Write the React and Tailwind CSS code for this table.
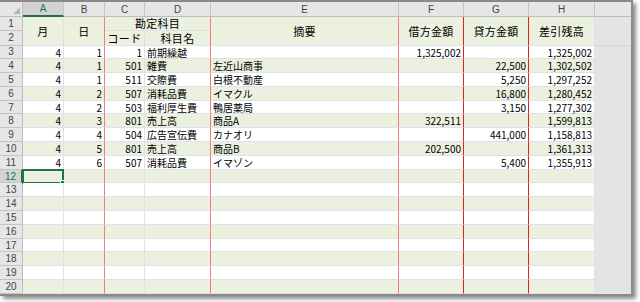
import React from 'react';

// column layout: width + right border colour
const COLS = [
    { key: 'a', w: 'w-[41px]', br: 'border-r-[#dde2e8]', align: 'text-right pr-[2px]' },
    { key: 'b', w: 'w-[41px]', br: 'border-r-[#f77a7a]', align: 'text-right pr-[2px]' },
    { key: 'c', w: 'w-[40px]', br: 'border-r-[#dde2e8]', align: 'text-right pr-[2px]' },
    { key: 'd', w: 'w-[66px]', br: 'border-r-[#f77a7a]', align: 'text-left pl-[2px]' },
    { key: 'e', w: 'w-[188px]', br: 'border-r-[#f77a7a]', align: 'text-left pl-[2px]' },
    { key: 'f', w: 'w-[65px]', br: 'border-r-[#f01c1c]', align: 'text-right pr-[2px]' },
    { key: 'g', w: 'w-[65px]', br: 'border-r-[#f01c1c]', align: 'text-right pr-[2px]' },
    { key: 'h', w: 'w-[66px]', br: 'border-r-[#dde2e8]', align: 'text-right pr-[2px]' },
];

const LETTERS = ['A', 'B', 'C', 'D', 'E', 'F', 'G', 'H'];

const DATA = [
    ['4', '1', '1', '前期繰越', '', '1,325,002', '', '1,325,002'],
    ['4', '1', '501', '雑費', '左近山商事', '', '22,500', '1,302,502'],
    ['4', '1', '511', '交際費', '白根不動産', '', '5,250', '1,297,252'],
    ['4', '2', '507', '消耗品費', 'イマクル', '', '16,800', '1,280,452'],
    ['4', '2', '503', '福利厚生費', '鴨居薬局', '', '3,150', '1,277,302'],
    ['4', '3', '801', '売上高', '商品A', '322,511', '', '1,599,813'],
    ['4', '4', '504', '広告宣伝費', 'カナオリ', '', '441,000', '1,158,813'],
    ['4', '5', '801', '売上高', '商品B', '202,500', '', '1,361,313'],
    ['4', '6', '507', '消耗品費', 'イマゾン', '', '5,400', '1,355,913'],
];

const font = "font-['Noto_Sans_CJK_JP',sans-serif]";
const hdrFont = "font-['Liberation_Sans','Noto_Sans_CJK_JP',sans-serif]";

const RowHead = ({ n, active }) => (
    <div
        className={`w-[23px] shrink-0 h-full flex items-center justify-center text-[10px] ${hdrFont} border-b border-b-[#c4c4c4] ${
            active
                ? 'bg-[#d3d3d3] text-[#217346] border-r-2 border-r-[#217346]'
                : 'bg-[#e6e6e6] text-[#444] border-r border-r-[#bdbdbd]'
        }`}
    >
        {n}
    </div>
);

const HeaderCell = ({ w, br, children }) => (
    <div className={`${w} ${br} shrink-0 h-full border-r border-b border-b-[#dde2e8] bg-[#ebf1de] flex items-center justify-center text-[11px] tracking-[0.3px]`}>
        {children}
    </div>
);

export default function App() {
    const rows = [];
    for (let r = 3; r <= 20; r++) {
        const vals = DATA[r - 3] || [];
        const green = r % 2 === 0;
        rows.push(
            <div key={r} className="flex h-[13.8px]">
                <RowHead n={r} active={r === 12} />
                {COLS.map((c, i) => (
                    <div
                        key={c.key}
                        className={`relative ${c.w} ${c.br} ${c.align} shrink-0 h-full border-r border-b border-b-[#dde2e8] leading-[13px] whitespace-nowrap ${
                            green ? 'bg-[#ebf1de]' : 'bg-white'
                        }`}
                    >
                        {vals[i] || ''}
                        {r === 12 && i === 0 && (
                            <div className="absolute -left-px -top-px w-[42px] h-[15px] border-2 border-[#217346]">
                                <div className="absolute -right-[3px] -bottom-[3px] w-[5px] h-[5px] bg-[#217346] border border-white" />
                            </div>
                        )}
                    </div>
                ))}
                <div className="flex-1 h-full bg-[#e4e4e4]" />
            </div>
        );
    }

    return (
        <div className="w-[640px] h-[302px] bg-white">
            <div className={`w-[633px] h-[296px] border-t-2 border-r-2 border-b-2 border-[#8a8a8a] shadow-[3px_3px_4px_rgba(0,0,0,0.45)] overflow-hidden flex flex-col text-[10px] text-black ${font}`}>
                {/* column letters */}
                <div className={`flex h-[15px] shrink-0 ${hdrFont}`}>
                    <div className="relative w-[23px] shrink-0 h-full bg-[#e6e6e6] border-r border-b border-[#bdbdbd]">
                        <svg className="absolute right-[2px] bottom-[2px]" width="7" height="7" viewBox="0 0 7 7">
                            <polygon points="7,0 7,7 0,7" fill="#b5b5b5" />
                        </svg>
                    </div>
                    {COLS.map((c, i) => (
                        <div
                            key={c.key}
                            className={`${c.w} shrink-0 h-full flex items-center justify-center border-r border-r-[#c6c6c6] ${
                                i === 0
                                    ? 'bg-[#d3d3d3] text-[#217346] border-b-2 border-b-[#217346]'
                                    : 'bg-[#e6e6e6] text-[#444] border-b border-b-[#bdbdbd]'
                            }`}
                        >
                            {LETTERS[i]}
                        </div>
                    ))}
                    <div className="flex-1 h-full bg-[#e6e6e6] border-b border-b-[#bdbdbd]" />
                </div>

                {/* header rows 1-2 */}
                <div className="flex h-[28.5px] shrink-0">
                    <div className="w-[23px] shrink-0 h-full flex flex-col">
                        <div className="h-[14.25px]"><RowHead n={1} /></div>
                        <div className="h-[14.25px]"><RowHead n={2} /></div>
                    </div>
                    <HeaderCell w={COLS[0].w} br={COLS[0].br}>月</HeaderCell>
                    <HeaderCell w={COLS[1].w} br={COLS[1].br}>日</HeaderCell>
                    <div className="w-[106px] shrink-0 h-full flex flex-col">
                        <div className="h-[14.25px] flex items-center justify-center bg-[#ebf1de] border-r border-r-[#f77a7a] border-b border-b-[#dde2e8] text-[11px] tracking-[0.3px]">
                            勘定科目
                        </div>
                        <div className="h-[14.25px] flex">
                            <HeaderCell w={COLS[2].w} br={COLS[2].br}>コード</HeaderCell>
                            <HeaderCell w={COLS[3].w} br={COLS[3].br}>科目名</HeaderCell>
                        </div>
                    </div>
                    <HeaderCell w={COLS[4].w} br={COLS[4].br}>摘要</HeaderCell>
                    <HeaderCell w={COLS[5].w} br={COLS[5].br}>借方金額</HeaderCell>
                    <HeaderCell w={COLS[6].w} br={COLS[6].br}>貸方金額</HeaderCell>
                    <HeaderCell w={COLS[7].w} br={COLS[7].br}>差引残高</HeaderCell>
                    <div className="flex-1 h-full bg-[#e4e4e4] border-b border-b-[#d6d6d6]" />
                </div>

                {rows}
            </div>
        </div>
    );
}
